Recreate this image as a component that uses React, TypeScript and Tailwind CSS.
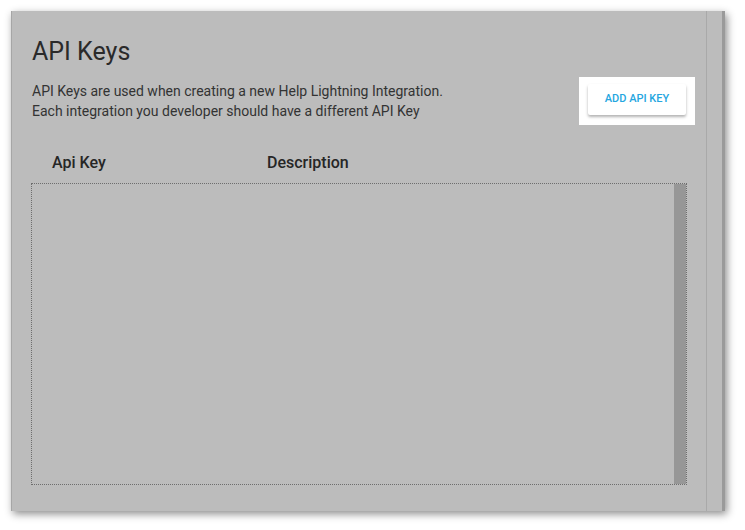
export default function App() {
  return (
    <div className="h-[530px] w-[745px] bg-white pl-[11px] pt-[11px] font-['Roboto',sans-serif]">
      <div className="flex h-[500px] w-[714px] border-l border-[#a6a6a6] bg-[#bcbcbc] shadow-[2px_3px_8px_rgba(0,0,0,0.45)]">
        <div className="flex flex-1 flex-col pl-[19px] pt-[25px]">
          <h1 className="ml-px h-8 text-[25px] leading-8 text-[#2a2a2a]">API Keys</h1>

          <div className="mt-[9px] flex items-center justify-between pr-[11px]">
            <p className="ml-px text-[14px] leading-5 text-[#333]">
              API Keys are used when creating a new Help Lightning Integration.
              <br />
              Each integration you developer should have a different API Key
            </p>
            <div className="bg-white px-[9px] pb-[10px] pt-[7px]">
              <button
                type="button"
                className="h-[31px] w-[98px] rounded-[2px] bg-white text-[11px] font-medium uppercase text-[#25a6df] shadow-[0_2px_3px_rgba(0,0,0,0.3)]"
              >
                Add API Key
              </button>
            </div>
          </div>

          <div className="mt-[26px] flex h-6 text-[16px] font-medium leading-6 text-[#262626]">
            <span className="w-[236px] pl-[21px]">Api Key</span>
            <span>Description</span>
          </div>

          <div className="mt-[8px] flex h-[302px] w-[656px] justify-end border border-dotted border-[#6e6e6e]">
            <div className="w-[12px] bg-[#979797]" />
          </div>
        </div>

        <div className="w-[16px] border-l border-[#a9a9a9]" />
        <div className="w-[3px] bg-[#9a9a9a]" />
      </div>
    </div>
  );
}
